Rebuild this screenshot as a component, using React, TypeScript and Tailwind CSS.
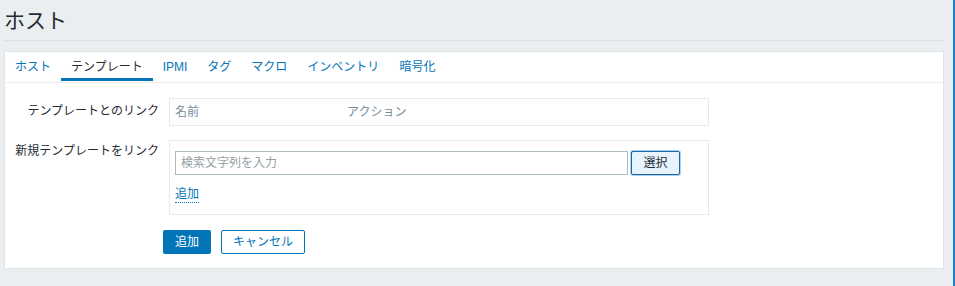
const font = "font-['Liberation_Sans','Noto_Sans_CJK_JP',sans-serif]";

const tabs = ['ホスト', 'テンプレート', 'IPMI', 'タグ', 'マクロ', 'インベントリ', '暗号化'];

function Tabs() {
  return (
    <div className="flex h-[31px] border-b border-[#ebeef0]">
      {tabs.map((t, i) => (
        <div
          key={t}
          className={`relative flex h-[30px] items-center px-[10px] text-[12px] ${
            i === 1 ? 'text-[#1f2c33]' : 'text-[#0275b8]'
          }`}
        >
          {t}
          {i === 1 && <span className="absolute bottom-[1px] left-0 right-0 h-[3px] bg-[#0275b8]" />}
        </div>
      ))}
    </div>
  );
}

export default function App() {
  return (
    <div className={`flex h-[286px] w-[955px] bg-[#ebeef0] ${font}`}>
      <div className="flex-1 pl-[4px] pr-[9px]">
        <div className="flex h-[41px] items-center border-b border-[#dde1e5]">
          <h1 className="text-[21px] leading-none text-[#1f2c33]">ホスト</h1>
        </div>
        <div className="mt-[10px] h-[218px] border border-[#dfe4e7] bg-white">
          <Tabs />
          <div className="pt-[15px]">
            <div className="flex">
              <div className="w-[164px] pr-[10px] pt-[6px] text-right text-[12px] leading-[14px] text-[#1f2c33]">
                テンプレートとのリンク
              </div>
              <div className="flex h-[28px] w-[540px] items-center border border-[#e6eaec] px-[5px] text-[12px] text-[#768d99]">
                <span className="w-[172px]">名前</span>
                <span>アクション</span>
              </div>
            </div>
            <div className="mt-[14px] flex">
              <div className="w-[164px] pr-[10px] pt-[4px] text-right text-[12px] leading-[14px] text-[#1f2c33]">
                新規テンプレートをリンク
              </div>
              <div className="h-[75px] w-[540px] border border-[#e6eaec] px-[5px] pt-[10px]">
                <div className="flex items-center gap-[3px]">
                  <input
                    placeholder="検索文字列を入力"
                    className="h-[24px] w-[453px] border border-[#acbbc2] px-[5px] text-[12px] text-[#1f2c33] outline-none placeholder:text-[#969fa5]"
                  />
                  <button className="h-[24px] w-[49px] rounded-[2px] border border-[#1f65a0] bg-[#e8f4fd] text-[12px] text-[#1f2c33] shadow-[0_0_0_1px_#a8d1f2]">
                    選択
                  </button>
                </div>
                <div className="mt-[6px]">
                  <span className="border-b border-dotted border-[#0275b8] pb-[1px] text-[12px] leading-[14px] text-[#0275b8]">
                    追加
                  </span>
                </div>
              </div>
            </div>
            <div className="mt-[15px] flex gap-[10px] pl-[158px]">
              <button className="h-[24px] w-[48px] rounded-[2px] bg-[#0275b8] text-[12px] text-white">追加</button>
              <button className="h-[24px] w-[84px] rounded-[2px] border border-[#0275b8] bg-white text-[12px] text-[#0275b8]">
                キャンセル
              </button>
            </div>
          </div>
        </div>
      </div>
      <div className="w-[2px] bg-[#1a7fd4]" />
    </div>
  );
}
